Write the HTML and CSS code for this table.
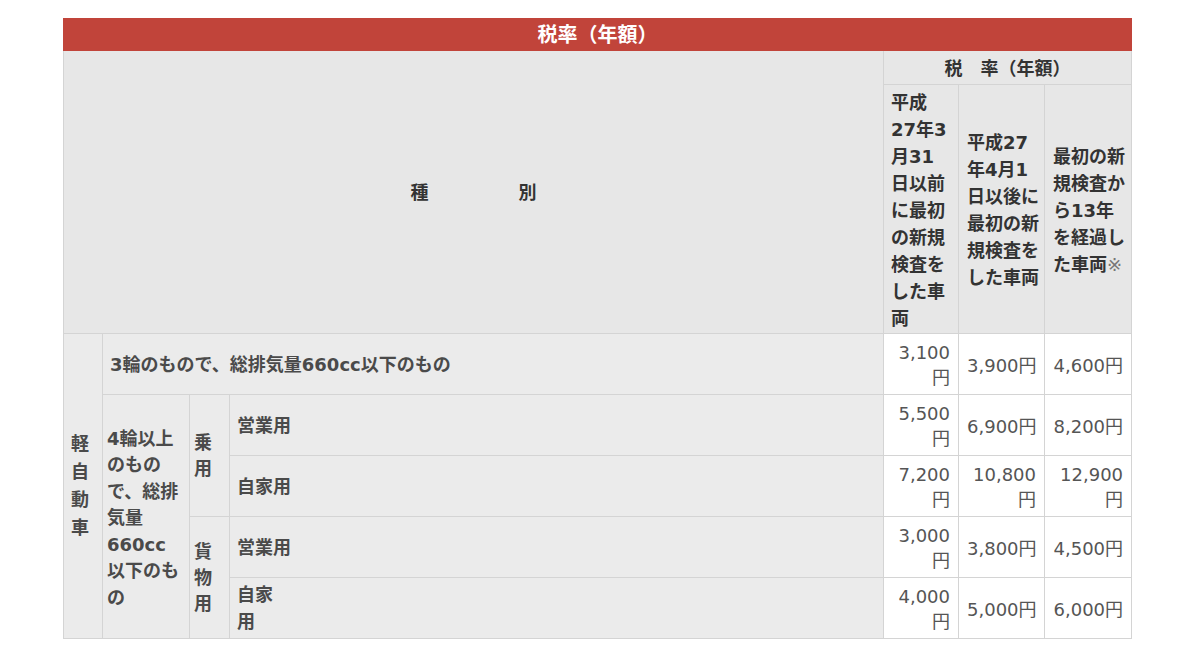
FILE: index.html
```html
<!DOCTYPE html>
<html lang="ja">
<head>
<meta charset="utf-8">
<title>税率（年額）</title>
<link rel="stylesheet" href="styles.css">
</head>
<body>
<table class="tax">
  <colgroup>
    <col class="c1"><col class="c2"><col class="c3"><col class="c4"><col class="c5"><col class="c6"><col class="c7">
  </colgroup>
  <tr class="title-row"><th colspan="7" class="title">税率（年額）</th></tr>
  <tr class="head1">
    <th colspan="4" rowspan="2" class="kind">種　　　　　別</th>
    <th colspan="3" class="rate">税　率（年額）</th>
  </tr>
  <tr class="head2">
    <th class="h h1">平成<br>27年3<br>月31<br>日以前<br>に最初<br>の新規<br>検査を<br>した車<br>両</th>
    <th class="h">平成27<br>年4月1<br>日以後に<br>最初の新<br>規検査を<br>した車両</th>
    <th class="h">最初の新<br>規検査か<br>ら13年<br>を経過し<br>た車両<span class="mark">※</span></th>
  </tr>
  <tr class="row">
    <th rowspan="5" class="lbl v1">軽<br>自<br>動<br>車</th>
    <th colspan="3" class="lbl wide">3輪のもので、総排気量660cc以下のもの</th>
    <td class="num">3,100<br>円</td><td class="num">3,900円</td><td class="num">4,600円</td>
  </tr>
  <tr class="row">
    <th rowspan="4" class="lbl v2">4輪以上<br>のもの<br>で、総排<br>気量<br>660cc<br>以下のも<br>の</th>
    <th rowspan="2" class="lbl v3">乗<br>用</th>
    <th class="lbl wide">営業用</th>
    <td class="num">5,500<br>円</td><td class="num">6,900円</td><td class="num">8,200円</td>
  </tr>
  <tr class="row">
    <th class="lbl wide">自家用</th>
    <td class="num">7,200<br>円</td><td class="num">10,800<br>円</td><td class="num">12,900<br>円</td>
  </tr>
  <tr class="row">
    <th rowspan="2" class="lbl v3">貨<br>物<br>用</th>
    <th class="lbl wide">営業用</th>
    <td class="num">3,000<br>円</td><td class="num">3,800円</td><td class="num">4,500円</td>
  </tr>
  <tr class="row">
    <th class="lbl wide">自家<br>用</th>
    <td class="num">4,000<br>円</td><td class="num">5,000円</td><td class="num">6,000円</td>
  </tr>
</table>
</body>
</html>
```
FILE: styles.css
```css
html, body {
  margin: 0;
  padding: 0;
  background: #ffffff;
}

body {
  font-family: "DejaVu Sans", "Noto Sans CJK JP", sans-serif;
  font-size: 18px;
  color: #444444;
}

.tax {
  margin: 18px 0 0 63px;
  width: 1069px;
  border-collapse: collapse;
  table-layout: fixed;
}

.c1 { width: 39px; }
.c2 { width: 87px; }
.c3 { width: 40px; }
.c4 { width: 654px; }
.c5 { width: 75px; }
.c6 { width: 86px; }
.c7 { width: 87px; }

.tax th,
.tax td {
  border: 1px solid #d4d4d4;
  padding: 0;
  vertical-align: middle;
  white-space: nowrap;
}

.title-row { height: 32px; }

.tax .title {
  background: #c1443a;
  border-color: #c1443a;
  color: #ffffff;
  font-size: 20px;
  font-weight: bold;
  text-align: center;
  line-height: 30px;
}

.head1 { height: 34px; }
.head2 { height: 249px; }

.tax .kind,
.tax .rate,
.tax .h {
  background: #e7e7e7;
  color: #333333;
  font-weight: bold;
}

.tax .kind {
  text-align: center;
  padding-bottom: 2px;
}

.tax .rate {
  text-align: center;
  line-height: 27px;
  padding-top: 2px;
}

.tax .h {
  text-align: left;
  line-height: 27px;
  padding: 2px 8px 0 8px;
}

.tax .h1 { padding-left: 7px; }

.mark {
  font-weight: normal;
  color: #777777;
}

.row { height: 61px; }

.tax .lbl {
  background: #ebebeb;
  color: #4a4a4a;
  font-weight: bold;
  text-align: left;
  line-height: 27px;
}

.tax .v1 { padding: 0 4px 0 7px; line-height: 28px; }
.tax .v2 { padding: 4px 3px 0 4px; line-height: 26.5px; }
.tax .v3 { padding: 0 3px 0 4px; line-height: 26px; }
.tax .wide { padding: 0 8px 0 7px; }

.tax .num {
  background: #ffffff;
  color: #555555;
  text-align: right;
  line-height: 25px;
  padding: 2px 8px 0 8px;
}
```
